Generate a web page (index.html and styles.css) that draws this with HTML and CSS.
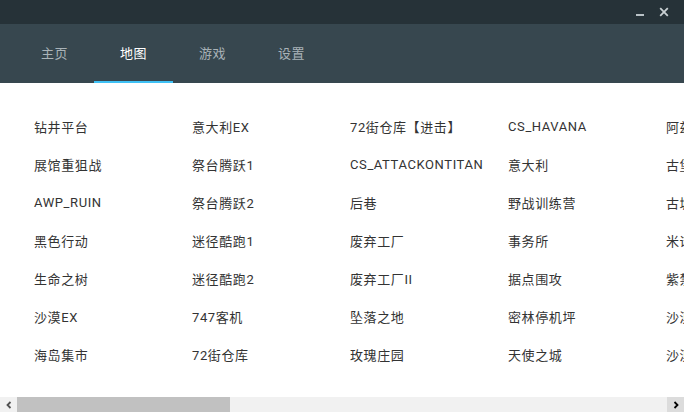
FILE: index.html
```html
<!DOCTYPE html>
<html lang="zh">
<head>
<meta charset="utf-8">
<title>地图</title>
<link rel="stylesheet" href="styles.css">
</head>
<body>
<div class="app">
  <header class="titlebar">
    <button class="win-btn" aria-label="最小化">
      <svg width="10" height="10" viewBox="0 0 10 10"><rect x="1" y="7" width="8" height="2" fill="#b9c2c6"/></svg>
    </button>
    <button class="win-btn" aria-label="关闭">
      <svg width="10" height="10" viewBox="0 0 10 10"><path d="M1.2 1.2 L8.8 8.8 M8.8 1.2 L1.2 8.8" stroke="#c9d0d3" stroke-width="1.8"/></svg>
    </button>
  </header>
  <nav class="tabs">
    <div class="tab">主页</div>
    <div class="tab active">地图</div>
    <div class="tab">游戏</div>
    <div class="tab">设置</div>
  </nav>
  <main class="content">
    <div class="grid">
      <div class="item">钻井平台</div>
      <div class="item">意大利EX</div>
      <div class="item">72街仓库【进击】</div>
      <div class="item">CS_HAVANA</div>
      <div class="item">阿兹特克</div>

      <div class="item">展馆重狙战</div>
      <div class="item">祭台腾跃1</div>
      <div class="item">CS_ATTACKONTITAN</div>
      <div class="item">意大利</div>
      <div class="item">古堡</div>

      <div class="item">AWP_RUIN</div>
      <div class="item">祭台腾跃2</div>
      <div class="item">后巷</div>
      <div class="item">野战训练营</div>
      <div class="item">古城</div>

      <div class="item">黑色行动</div>
      <div class="item">迷径酷跑1</div>
      <div class="item">废弃工厂</div>
      <div class="item">事务所</div>
      <div class="item">米诺斯</div>

      <div class="item">生命之树</div>
      <div class="item">迷径酷跑2</div>
      <div class="item">废弃工厂II</div>
      <div class="item">据点围攻</div>
      <div class="item">紫禁城</div>

      <div class="item">沙漠EX</div>
      <div class="item">747客机</div>
      <div class="item">坠落之地</div>
      <div class="item">密林停机坪</div>
      <div class="item">沙漠1</div>

      <div class="item">海岛集市</div>
      <div class="item">72街仓库</div>
      <div class="item">玫瑰庄园</div>
      <div class="item">天使之城</div>
      <div class="item">沙漠2</div>
    </div>
  </main>
  <div class="hscroll">
    <div class="sb-btn">
      <svg width="8" height="8" viewBox="0 0 8 8"><path d="M5.5 1 L2.5 4 L5.5 7" fill="none" stroke="#505050" stroke-width="1.8"/></svg>
    </div>
    <div class="sb-track"><div class="sb-thumb"></div></div>
    <div class="sb-btn right">
      <svg width="8" height="8" viewBox="0 0 8 8"><path d="M2.5 1 L5.5 4 L2.5 7" fill="none" stroke="#000" stroke-width="1.8"/></svg>
    </div>
  </div>
</div>
</body>
</html>
```

FILE: styles.css
```css
html, body {
  margin: 0;
  padding: 0;
  width: 684px;
  height: 412px;
  overflow: hidden;
  background: #fff;
}
.app {
  display: flex;
  flex-direction: column;
  width: 684px;
  height: 412px;
  font-family: Roboto, "Noto Sans CJK SC", sans-serif;
}
.titlebar {
  height: 24px;
  background: #263238;
  display: flex;
  justify-content: flex-end;
  align-items: center;
  padding-right: 15px;
  gap: 14px;
  flex: none;
}
.win-btn {
  border: 0;
  background: none;
  padding: 0;
  width: 10px;
  height: 10px;
  display: block;
}
.win-btn svg { display: block; }
.tabs {
  height: 59px;
  background: #37474f;
  display: flex;
  padding-left: 15px;
  flex: none;
}
.tab {
  width: 79px;
  box-sizing: border-box;
  display: flex;
  align-items: center;
  justify-content: center;
  font-size: 13px;
  letter-spacing: 0.5px;
  color: #a9b3b8;
  border-bottom: 2px solid transparent;
}
.tab.active {
  color: #ffffff;
  border-bottom-color: #3fc1f5;
}
.content {
  flex: 1;
  overflow: hidden;
  background: #fff;
}
.grid {
  display: grid;
  grid-template-columns: repeat(5, 158px);
  grid-auto-rows: 38px;
  padding: 24px 0 0 34px;
  width: max-content;
}
.item {
  display: flex;
  align-items: center;
  font-size: 13px;
  letter-spacing: 0.6px;
  color: #333;
  white-space: nowrap;
}
.hscroll {
  height: 15px;
  flex: none;
  display: flex;
  background: #f1f1f1;
}
.sb-btn {
  width: 17px;
  height: 15px;
  display: flex;
  align-items: center;
  justify-content: center;
  flex: none;
}
.sb-btn.right { background: #dcdcdc; }
.sb-track {
  flex: 1;
  display: flex;
}
.sb-thumb {
  width: 213px;
  background: #c1c1c1;
}
```
